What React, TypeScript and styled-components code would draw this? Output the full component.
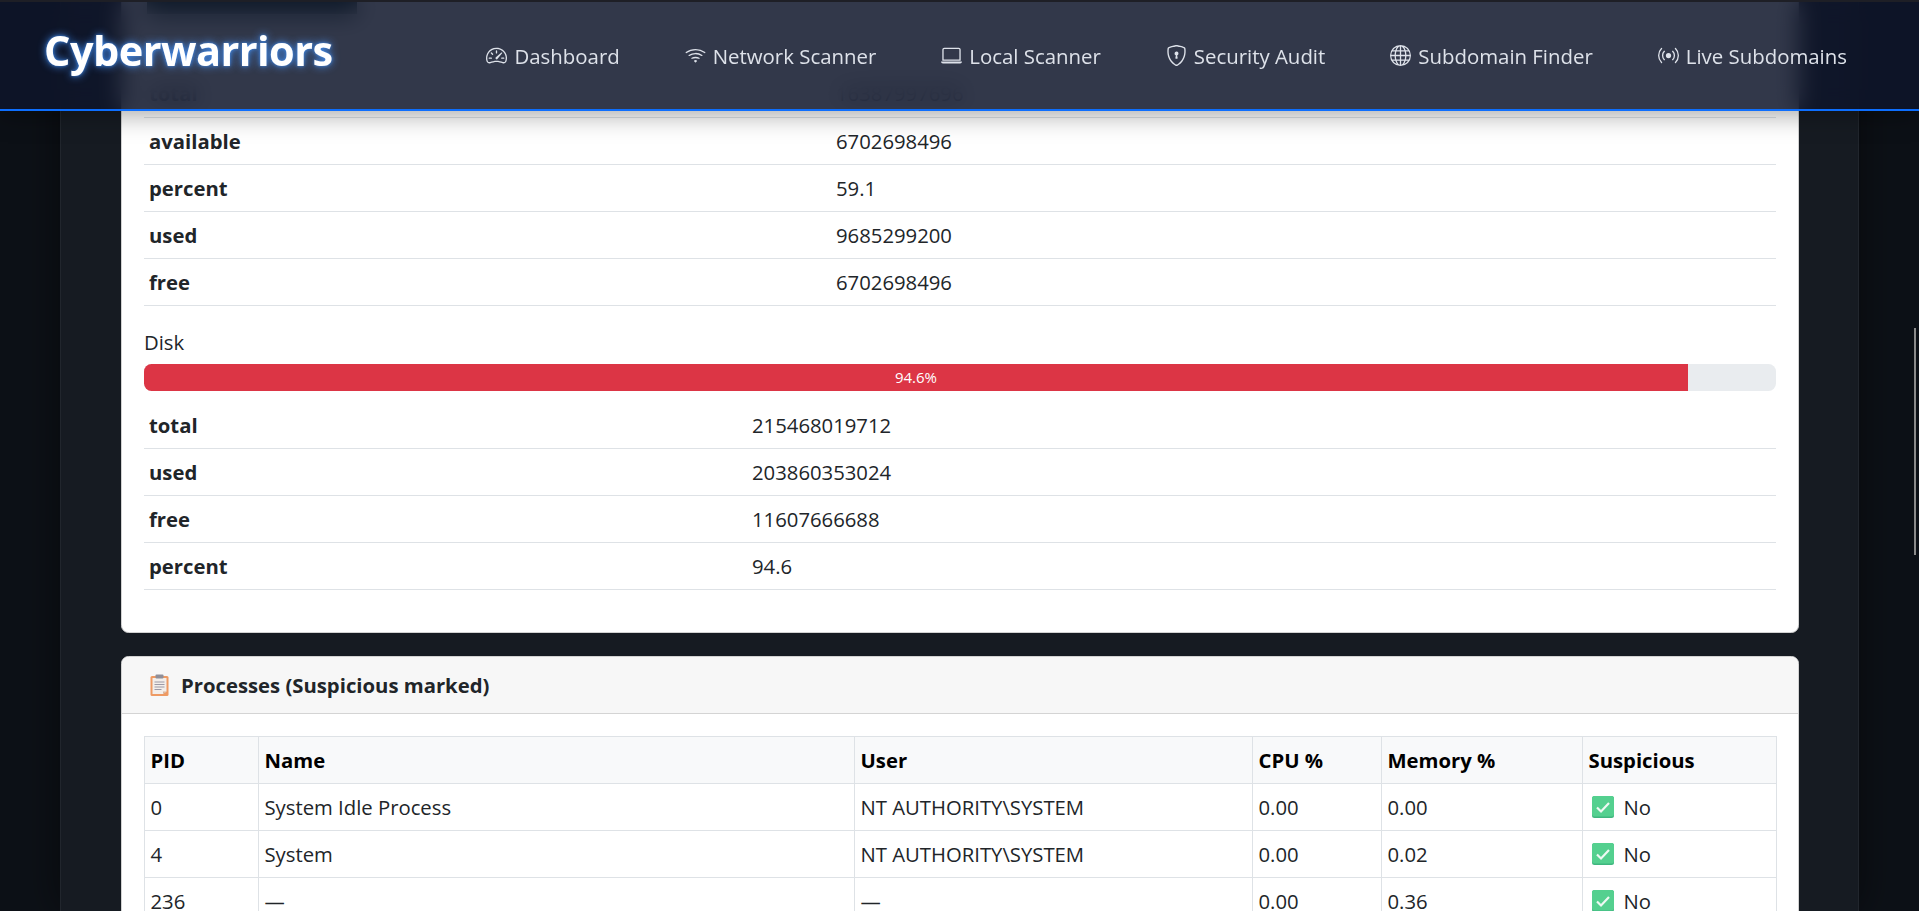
import React from "react";
import styled, { createGlobalStyle } from "styled-components";
import { BsSpeedometer2, BsWifi, BsLaptop, BsShieldLock, BsGlobe, BsBroadcast } from "react-icons/bs";

const FONT = `"Open Sans", "Noto Sans", "Liberation Sans", sans-serif`;

const Global = createGlobalStyle`
  html, body { margin: 0; padding: 0; height: 100%; overflow: hidden; background: #0d1117; }
  body { font-family: ${FONT}; font-size: 20.3px; color: #212529; }
  * { box-sizing: border-box; }
`;

const Shell = styled.div`
  height: 911px;
  overflow: hidden;
  padding: 0 60px;
  background: #0d1117;
`;

const Container = styled.main`
  display: flow-root;
  height: 100%;
  padding: 0 59px 0 60px;
  background: #161b22;
  border-left: 1px solid #21262d;
  border-right: 1px solid #21262d;
  box-shadow: 0 0 40px rgba(0, 0, 0, 0.5);
`;

const Nav = styled.nav`
  position: fixed;
  top: 0;
  left: 0;
  right: 0;
  height: 111px;
  z-index: 10;
  display: flex;
  align-items: center;
  padding: 0 72px 0 44px;
  background: rgba(14, 21, 42, 0.85);
  backdrop-filter: blur(12px);
  border-top: 2px solid #1e1f26;
  border-bottom: 2px solid #0d6efd;
  box-shadow: 0 4px 24px rgba(0, 0, 0, 0.35);
`;

const Brand = styled.div`
  font-size: 41.5px;
  font-weight: 700;
  color: #fff;
  letter-spacing: -0.55px;
  line-height: 56px;
  margin-top: -12px;
  text-shadow: 0 0 9px rgba(70, 150, 255, 0.95), 0 0 3px rgba(70, 150, 255, 0.7);
`;

const NavList = styled.div`
  margin-left: auto;
  display: flex;
  align-items: center;
  gap: 65px;
`;

const NavItem = styled.a`
  display: flex;
  align-items: center;
  gap: 7px;
  font-size: 20.4px;
  color: #dee2ea;
  line-height: 28px;
  white-space: nowrap;
  svg { width: 21px; height: 21px; flex: none; }
`;

const Scrollbar = styled.div`
  position: fixed;
  top: 328px;
  right: 3px;
  width: 2px;
  height: 227px;
  background: #8a8a8a;
  z-index: 11;
`;

const Card = styled.section<{ $top: number }>`
  width: 1678px;
  margin-top: ${(p) => p.$top}px;
  background: #fff;
  border: 1px solid #d2d2d2;
  border-radius: 7.5px;
  overflow: hidden;
`;

const CardHeader = styled.header`
  height: 57px;
  padding: 0 28px;
  display: flex;
  align-items: center;
  gap: 12px;
  background: #f7f7f7;
  border-bottom: 1px solid #d4d4d4;
  font-weight: 700;
`;

const CardBody = styled.div`
  padding: 22px;
`;

/* the scrolled-away section title, seen only as a dark smear through the navbar's blur */
const ScrolledAwayBlock = styled.div`
  width: 210px;
  height: 14px;
  margin: 15px 0 56px 3px;
  background: #103020;
`;

const InfoTable = styled.table<{ $gap: number }>`
  width: 100%;
  border-collapse: collapse;
  table-layout: fixed;
  margin-bottom: ${(p) => p.$gap}px;
`;

const InfoRow = styled.tr`
  height: 47px;
  border-bottom: 1px solid #dee2e6;
`;

const InfoKey = styled.th<{ $w: number }>`
  width: ${(p) => p.$w}px;
  padding: 0 5px;
  text-align: left;
  font-weight: 700;
`;

const InfoValue = styled.td`
  padding: 0 6px;
`;

const BarLabel = styled.div`
  line-height: 30px;
  margin-bottom: 7px;
`;

const Track = styled.div`
  height: 27px;
  margin-bottom: 11px;
  background: #e9ecef;
  border-radius: 7.5px;
  overflow: hidden;
  display: flex;
`;

const Fill = styled.div<{ $pct: number }>`
  width: ${(p) => p.$pct}%;
  background: #dc3545;
  text-align: center;
  font-size: 15px;
  line-height: 27px;
  color: #fff;
`;

const ProcTable = styled.table`
  width: 1632px;
  border-collapse: collapse;
  table-layout: fixed;
`;

const Th = styled.th<{ $w: number }>`
  width: ${(p) => p.$w}px;
  height: 47px;
  padding: 0 5.5px;
  text-align: left;
  font-weight: 700;
  color: #000;
  background: #f8f9fa;
  border: 1px solid #dee2e6;
`;

const Td = styled.td`
  height: 47px;
  padding: 0 5.5px;
  border: 1px solid #dee2e6;
  white-space: nowrap;
`;

const Status = styled.span`
  display: flex;
  align-items: center;
  gap: 10px;
  padding-left: 3px;
`;

const ClipboardIcon = () => (
  <svg width="19" height="22" viewBox="0 0 19 22">
    <rect x="0.5" y="2" width="18" height="20" rx="1.5" fill="#ee9a63" />
    <path d="M2.5 4h14v13.5L13 20H2.5z" fill="#f3eeea" />
    <path d="M13 20l3.5-2.5H13z" fill="#d8b49c" />
    <rect x="5.5" y="0.5" width="8" height="4" rx="1" fill="#8f8f9a" />
    <path d="M4.5 8h10M4.5 10.5h10M4.5 13h10M4.5 15.5h7" stroke="#9d9aa6" strokeWidth="1" />
  </svg>
);

const CheckIcon = () => (
  <svg width="22" height="22" viewBox="0 0 22 22">
    <rect x="0" y="0" width="22" height="22" rx="2.5" fill="#3fb67e" />
    <rect x="0" y="0" width="22" height="20.5" rx="2.5" fill="#54d08f" />
    <path d="M5 11.5l4 4 8-8.5" fill="none" stroke="#eef9f3" strokeWidth="2.2" />
  </svg>
);

const links: [React.ComponentType, string][] = [
  [BsSpeedometer2, "Dashboard"],
  [BsWifi, "Network Scanner"],
  [BsLaptop, "Local Scanner"],
  [BsShieldLock, "Security Audit"],
  [BsGlobe, "Subdomain Finder"],
  [BsBroadcast, "Live Subdomains"],
];

const memory = [
  ["total", "16387997696"],
  ["available", "6702698496"],
  ["percent", "59.1"],
  ["used", "9685299200"],
  ["free", "6702698496"],
];

const disk = [
  ["total", "215468019712"],
  ["used", "203860353024"],
  ["free", "11607666688"],
  ["percent", "94.6"],
];

const columns: [string, number][] = [
  ["PID", 114],
  ["Name", 596],
  ["User", 398],
  ["CPU %", 129],
  ["Memory %", 201],
  ["Suspicious", 194],
];

const processes = [
  ["0", "System Idle Process", "NT AUTHORITY\\SYSTEM", "0.00", "0.00"],
  ["4", "System", "NT AUTHORITY\\SYSTEM", "0.00", "0.02"],
  ["236", "—", "—", "0.00", "0.36"],
];

const Info = ({ rows, w, gap }: { rows: string[][]; w: number; gap: number }) => (
  <InfoTable $gap={gap}>
    <tbody>
      {rows.map(([k, v]) => (
        <InfoRow key={k}>
          <InfoKey $w={w}>{k}</InfoKey>
          <InfoValue>{v}</InfoValue>
        </InfoRow>
      ))}
    </tbody>
  </InfoTable>
);

export default function App() {
  return (
    <>
      <Global />
      <Nav>
        <Brand>Cyberwarriors</Brand>
        <NavList>
          {links.map(([Icon, label]) => (
            <NavItem key={label}>
              <Icon />
              {label}
            </NavItem>
          ))}
        </NavList>
      </Nav>
      <Scrollbar />
      <Shell>
        <Container>
          <Card $top={-38}>
            <CardBody>
              <ScrolledAwayBlock />
              <Info rows={memory} w={686} gap={21} />
              <BarLabel>Disk</BarLabel>
              <Track>
                <Fill $pct={94.6}>94.6%</Fill>
              </Track>
              <Info rows={disk} w={602} gap={20} />
            </CardBody>
          </Card>
          <Card $top={23}>
            <CardHeader>
              <ClipboardIcon />
              Processes (Suspicious marked)
            </CardHeader>
            <CardBody>
              <ProcTable>
                <thead>
                  <tr>
                    {columns.map(([name, w]) => (
                      <Th key={name} $w={w}>{name}</Th>
                    ))}
                  </tr>
                </thead>
                <tbody>
                  {processes.map((p) => (
                    <tr key={p[0]}>
                      {p.map((c, i) => (
                        <Td key={i}>{c}</Td>
                      ))}
                      <Td>
                        <Status>
                          <CheckIcon />
                          No
                        </Status>
                      </Td>
                    </tr>
                  ))}
                </tbody>
              </ProcTable>
            </CardBody>
          </Card>
        </Container>
      </Shell>
    </>
  );
}
